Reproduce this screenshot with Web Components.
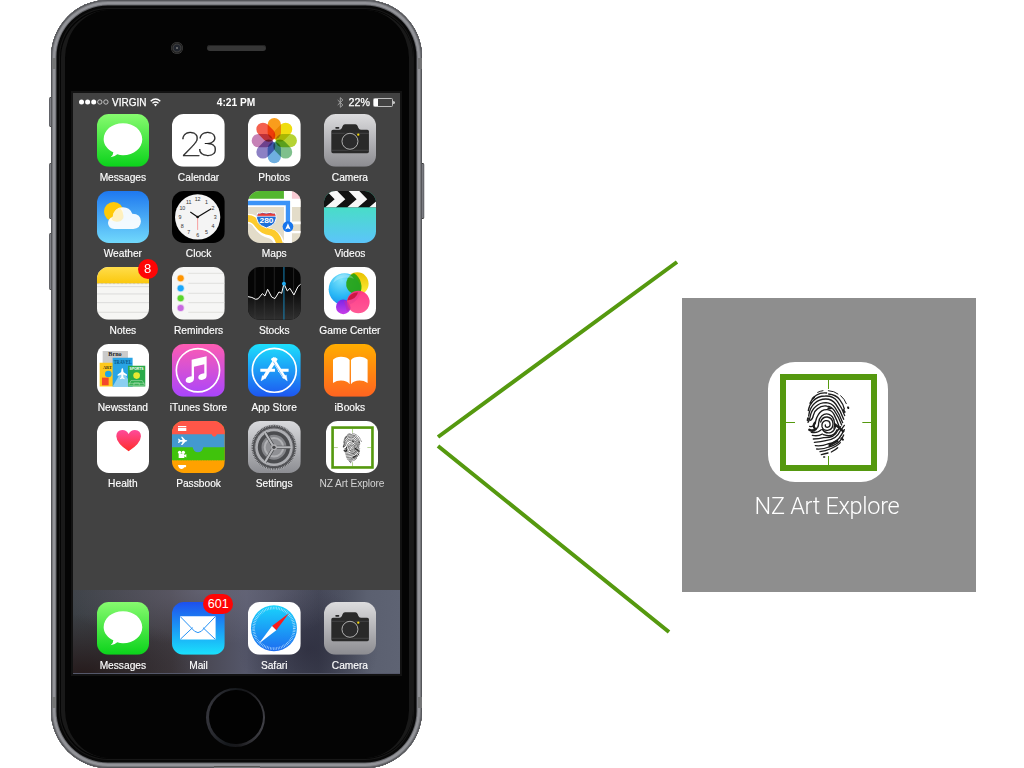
<!DOCTYPE html>
<html lang="en">
<head>
<meta charset="utf-8">
<title>NZ Art Explore</title>
<style>
html,body{margin:0;width:1024px;height:768px;overflow:hidden;background:#fff;font-family:"Liberation Sans",Arial,sans-serif}
</style>
</head>
<body>
<home-showcase></home-showcase>
<script>
const range = n => Array.from({length:n},(_,i)=>i);
const grad = (id,a,b) => `<linearGradient id="${id}" x1="0" y1="0" x2="0" y2="1"><stop offset="0" stop-color="${a}"/><stop offset="1" stop-color="${b}"/></linearGradient>`;
const bg = (a,b) => `<defs>${grad('bg',a,b)}</defs><rect width="158" height="158" fill="url(#bg)"/>`;
const petals = ['#f99d1c','#efdd10','#b5d334','#7fc08c','#6fafe0','#8c80c4','#c682b6','#f4604e'];

const nzMark = `
<rect width="360" height="360" fill="#fff"/>
<rect x="45" y="45" width="273" height="273" fill="none" stroke="#55990f" stroke-width="18"/>
<path d="M181.500 54v27M181.500 282v27M54 181.500h27M283 181.500h26" stroke="#55990f" stroke-width="3"/>
<g transform="translate(102 72)" fill="none" stroke="#1c1c1c" stroke-width="4" stroke-linecap="round" stroke-linejoin="round">
<path d="M47 19q8-4 16-5M79 14q18 1 29 10M116 29q12 10 17 24" stroke-width="3"/>
<path d="M24 52Q31 35 44 27q13-8 30-6M80 24q22 2 33 17 11 14 14 28"/>
<path d="M19 74q3-18 14-29 14-15 37-15 24-1 36 16 15 21 22 43"/>
<path d="M20 90q3-25 18-38 14-13 33-13 19 0 30 15 15 21 24 46"/>
<path d="M18 109q4-5 6-15 4-22 18-33 12-11 30-11 17 1 27 15 14 20 23 45"/>
<path d="M25 103q7-3 9-15 3-13 13-20 11-10 27-8 14 1 23 14 13 19 22 43"/>
<path d="M23 121q12 4 17-12 3-14 9-23 9-16 27-15 13 1 20 14 9 18 16 38"/>
<path d="M22 132q17 3 25-8 3-5 3-13 1-14 9-21 10-9 22-5 13 5 16 22 2 10-1 20"/>
<path d="M28 139q20 3 30-8M56 108q5-16 20-15 16 3 17 20 0 17-16 20-14 1-17-11-2-14 10-18 12-2 14 8 2 11-8 12-7 0-6-7"/>
<path d="M61 130q10 15 26 9 12-5 14-21M31 148q17 4 30-4M64 146q30 11 41-15"/>
<path d="M34 159q18 0 31-4 33 1 41-20l10-13"/>
<path d="M37 169q21-1 34-5 32-2 45-31l11-15"/>
<path d="M40 179q21 2 37-5 29-4 42-29l8-14"/>
<path d="M44 189q22 1 36-6 28-7 40-26l5-10"/>
<path d="M54 197q18-2 30-8 21-8 31-19M58 206q11-3 20-5M88 198q13-7 19-13M65 213h3"/>
<path d="M22 131q8 5 15 2M99 115l25 21M39 110q-9 11 2 20M83 178l23-13" stroke-width="7"/>
<path d="M138 64l1 2M128 78l-4-6M32 38l4-4M79 67h8M118 157l5 4M18 97l-1 6" stroke-width="6"/>
</g>`;

const camera = `${bg('#dcdcde','#8c8c91')}
<path d="M22 52q0-5 5-5h19q6 0 8-6l2-5q2-5 7-5h31q5 0 7 5l2 5q2 6 8 6h19q5 0 5 5v61q0 5-5 5H27q-5 0-5-5z" fill="#292929"/>
<rect x="34" y="39" width="12" height="5" rx="2" fill="#292929"/>
<path d="M22 58h113M22 109h113" stroke="#66666a" stroke-width="1.3"/>
<circle cx="78" cy="82" r="29" fill="#292929"/><circle cx="78" cy="82" r="24" fill="#2b2b2c" stroke="#c9c9c9" stroke-width="2.5"/>
<circle cx="103" cy="62" r="3.5" fill="#f5d90a"/>`;

const icons = {
messages: `${bg('#87fb6f','#0bd31b')}<path d="M78 28c33 0 58 21 58 48s-25 48-58 48q-9 0-17-3-9 8-20 9 8-6 8-15C32 107 20 93 20 76c0-27 25-48 58-48z" fill="#fff"/>`,
calendar: `<rect width="158" height="158" fill="#fff"/><text transform="translate(25 127) scale(1.16 1)" font-family="Roboto" font-weight="100" font-size="98" letter-spacing="-10" fill="#222" stroke="#222" stroke-width=".8">23</text>`,
photos: `<rect width="158" height="158" fill="#fff"/><g style="isolation:isolate">${petals.map((c,i)=>`<rect x="59" y="12" width="40" height="64" rx="20" fill="${c}" style="mix-blend-mode:multiply" transform="rotate(${i*45} 79 80)"/>`).join('')}</g><circle cx="79" cy="80" r="3" fill="#fff"/>`,
camera,
weather: `${bg('#1e78ef','#72dafc')}<circle cx="50" cy="62" r="29" fill="#ffc907"/><path d="M52 114q-18-1-19-18 1-14 14-18 4-29 31-29 20 0 28 19 26 1 26 23-1 22-23 23z" fill="#fff" opacity=".93"/><path d="M47 78q2-22 22-28 13 17 10 32-8 13-24 10-16-4-8-14z" fill="#ffeaa5" opacity=".65"/>`,
clock: `<rect width="158" height="158" fill="#000"/><circle cx="77" cy="78" r="68" fill="#f4f4f4"/>${range(12).map(i=>{const n=i+1,a=n*Math.PI/6;return `<text x="${77+53*Math.sin(a)}" y="${84-53*Math.cos(a)}" text-anchor="middle" font-size="16" fill="#333">${n}</text>`}).join('')}<path d="M77 78v39" stroke="#f68d8d" stroke-width="2.500"/><path d="M55 63l22 15 41-25" stroke="#111" stroke-width="3.500" fill="none"/><circle cx="77" cy="78" r="4" fill="#111"/>`,
maps: `<rect width="158" height="158" fill="#e3dcc9"/><path d="M0 0h108v24H0z" fill="#53b62f"/><path d="M130 0h28v26h-28z" fill="#f9cbd4"/><path d="M108 0h24v158h-24zM0 23h158v25H0zM132 92h26v8h-26zM132 120h26v7h-26z" fill="#fff"/><path d="M0 83q19 0 29 17 15 23 39 28 17 4 27 30" fill="none" stroke="#fff" stroke-width="30"/><path d="M-3 82q20 0 31 17 16 22 41 25 17 4 26 34" fill="none" stroke="#fdcb2e" stroke-width="20"/><path d="M0 36h120v70" fill="none" stroke="#3b93f7" stroke-width="13"/><circle cx="120" cy="107" r="16" fill="#1875ec"/><path d="M120 97l8 19-8-4-8 4z" fill="#fff"/><path d="M29 66q9 3 14-2 12 5 24 0 5 5 15 2 7 15-2 30-7 9-25 15-17-6-24-15-10-15-2-30z" fill="#1b70da" stroke="#fff" stroke-width="3"/><path d="M30 68q9 1 13-2 12 4 24 0 5 3 14 2l2 8H28z" fill="#e33c3a"/><path d="M27 76h57" stroke="#fff" stroke-width="2"/><text x="55.500" y="96" text-anchor="middle" font-size="23" font-weight="700" fill="#fff" textLength="42" lengthAdjust="spacingAndGlyphs">280</text>`,
videos: `${bg('#40e8b0','#5cc4fb')}<rect width="158" height="49" fill="#111"/>${[-46,20,86,152].map(x=>`<path d="M${x-12} 0h32l24 25-28 24h-32l28-24z" fill="#f7f7f7"/>`).join('')}`,
notes: `<rect width="158" height="158" fill="#f6f6f4"/><defs>${grad('nb','#ffdd4b','#fbc80d')}</defs><rect width="158" height="49" fill="url(#nb)"/><path d="M0 50h158" stroke="#a99e7d" stroke-width="2" stroke-dasharray="2 2"/><path d="M0 59h158M0 81h158M0 107h158M0 136h158" stroke="#cfcfcd" stroke-width="2"/>`,
reminders: `<rect width="158" height="158" fill="#f6f6f5"/><path d="M49 19h109M49 49h109M49 79h109M49 107h109M49 136h109" stroke="#d4d4d2" stroke-width="2"/>${['#ff9500','#1ba8fb','#5bd62c','#c869e0'].map((c,i)=>`<circle cx="26" cy="${[34,64,94,123][i]}" r="11.500" fill="${c}" opacity=".3"/><circle cx="26" cy="${[34,64,94,123][i]}" r="9" fill="${c}"/>`).join('')}`,
stocks: `<rect width="158" height="158" fill="#050505"/><defs>${grad('sg','#000','#303030')}</defs><path d="M0 89L23 97 43 80l8 7 8-20 12 23 10 5 12-20 8 4 7-29 10 22 8-8 12 20 12-25 8-7v106H0z" fill="url(#sg)"/><path d="M21 0v158M49 0v158M79 0v158M137 0v158" stroke="#3c3c3c" stroke-width="1.600"/><path d="M108 0v158" stroke="#1684b8" stroke-width="3"/><path d="M0 89q12 1 23 8 8 1 12-7l8-10 8 7 8-20 12 23 10 5 12-20 8 4 7-29 10 22 8-8 12 20 12-25 8-7" fill="none" stroke="#fff" stroke-width="3"/><circle cx="108" cy="50" r="6" fill="#1eaaf1"/>`,
game: `<defs><radialGradient id="b" cx=".4" cy=".2" r=".9"><stop offset="0" stop-color="#7be3fb"/><stop offset=".6" stop-color="#27b6f5"/><stop offset="1" stop-color="#1680e4"/></radialGradient>${grad('y','#e9c100','#fff03a')}${grad('p','#ff2f83','#ff4f8e')}${grad('v','#7b25e8','#c83ee8')}</defs><rect width="158" height="158" fill="#fff"/><circle cx="100" cy="50" r="34" fill="url(#y)"/><circle cx="62" cy="67" r="48" fill="url(#b)"/><path d="M67 57a34 34 0 0 1 23-38 48 48 0 0 1 17 63 34 34 0 0 1-40-25z" fill="#28a30b" opacity=".9"/><circle cx="58" cy="120" r="22" fill="url(#v)"/><circle cx="103" cy="105" r="34" fill="url(#p)" opacity=".94"/><path d="M70 101q5-23 32-25-4 21-32 25z" fill="#cc1744"/><path d="M60 102q13-3 20 22-5 7-11 9z" fill="#c22aad" opacity=".6"/><path d="M27 48q7-25 34-27 21 1 29 14Q56 24 27 48z" fill="#fff" opacity=".25"/>`,
news: `<rect width="158" height="158" fill="#fff"/><path d="M17 21h76v60H17z" fill="#cbcbcb"/><text x="54" y="35" font-family="Liberation Serif" font-weight="700" font-size="17" text-anchor="middle" textLength="40" lengthAdjust="spacingAndGlyphs" fill="#222">Brno</text><path d="M8 56h42v72H8z" fill="#ffc91d"/><text x="18" y="74" font-family="Liberation Serif" font-size="15" font-weight="700" textLength="27" lengthAdjust="spacingAndGlyphs" fill="#3a3218">ART</text><circle cx="34" cy="90" r="10" fill="#1ca6e9"/><rect x="15" y="101" width="20" height="23" fill="#f4482c"/><path d="M47 41h60v87H47z" fill="#29a4e5"/><text x="50" y="61" font-family="Liberation Serif" font-size="18" font-weight="700" textLength="54" lengthAdjust="spacingAndGlyphs" fill="#075786">TRAVEL</text><path d="M47 128l29-50 31 50z" fill="#8bcff1"/><path d="M76 72q3 1 3 9v3l11 8v4l-11-4v8l4 4v2l-7-2-7 2v-2l4-4v-8l-11 4v-4l11-8v-3q0-8 3-9z" fill="#fff"/><path d="M93 65h52v63H93z" fill="#2aab4a"/><text x="119" y="79" font-size="12" font-weight="700" textLength="42" text-anchor="middle" lengthAdjust="spacingAndGlyphs" fill="#fff">SPORTS</text><circle cx="119" cy="95" r="10" fill="#e8e931"/><path d="M95 124l7-14h34l7 14zM94 118h49M111 124v-7h16v7" stroke="#a8ddad" fill="none" stroke-width="2"/>`,
itunes: `${bg('#fd5cb2','#a945fd')}<circle cx="78" cy="79" r="65" fill="none" stroke="#fff" stroke-width="5"/><path d="M59 47l45-10v58q0 11-14 13-12 0-11-9 2-9 18-11V61L66 68v36q0 11-13 13-13 0-12-9 2-9 18-11z" fill="#fff"/>`,
appstore: `${bg('#1de0fc','#1d56f0')}<circle cx="79" cy="79" r="66" fill="none" stroke="#fff" stroke-width="5"/><path d="M37 79h44M90 79h32" stroke="#fff" stroke-width="9"/><path d="M73 42l37 60M85 42l-37 60" stroke="#fff" stroke-width="10.500"/><path d="M76 53l31 49" stroke="#2594f6" stroke-width="1.600"/><path d="M104 100l11-7 3 18zM43 95l10 7-14 9z" fill="#fff" stroke="#fff"/>`,
ibooks: `${bg('#ffad00','#ff6420')}<path d="M77 48q-8-10-26-10-15 0-24 9v70q11-7 24-7 18 0 26 11zM81 48q8-10 26-10 15 0 24 9v70q-11-7-24-7-18 0-26 11z" fill="#fff"/>`,
health: `<defs>${grad('h','#fe4a9b','#ff2d2a')}</defs><rect width="158" height="158" fill="#fff"/><path d="M95 91Q59 68 58 46q0-18 18-19 13 0 19 12 6-12 19-12 18 1 18 19-1 22-37 45z" fill="url(#h)"/>`,
passbook: `<rect width="158" height="158" fill="#ffa100"/><path d="M0 78h158v41H0z" fill="#40c30c"/><path d="M0 39h158v40H94q-3 15-16 15T62 79H0z" fill="#4399cf"/><path d="M0 0h158v40h-23q-2 7-8 7t-8-7H0z" fill="#ff5648"/><path d="M0 119h158" stroke="#ffa100" stroke-width="2" stroke-dasharray="3 2"/><g fill="#fff"><path d="M18 15h25v3H18zM18 20h25v10H18z"/><path d="M18 53h3l4 4h7l-5-10h4l9 10q6 1 6 2.500t-6 2.500l-9 10h-4l5-10h-7l-4 4h-3l2-6.500z"/><circle cx="23" cy="94" r="5"/><circle cx="34" cy="94" r="5"/><path d="M20 98h17v13H20zM37 103l6-4v11l-6-4z"/><path d="M18 132h22q5 1 1 7h-4q-3 5-8 5-9 0-11-12z"/></g>`,
settings: `${bg('#d9dadd','#8c8d92')}<circle cx="78" cy="79" r="63" fill="none" stroke="#4e4f52" stroke-width="9"/><circle cx="78" cy="79" r="66" fill="none" stroke="#b3b4b8" stroke-width="6" stroke-dasharray="2.600 2.600"/><circle cx="78" cy="79" r="58" fill="#adaeb2" stroke="#4a4b4e" stroke-width="2.500"/><circle cx="78" cy="79" r="43" fill="#86878b" stroke="#4b4c4f" stroke-width="11"/><circle cx="78" cy="79" r="28" fill="#8f9094" stroke="#b0b1b4" stroke-width="6"/><path d="M78 79h50M78 79L52 35M78 79L52 123" stroke="#4b4c4f" stroke-width="10"/><path d="M78 79h54M78 79L50 33M78 79L50 125" stroke="#b6b7ba" stroke-width="6"/><circle cx="78" cy="79" r="9" fill="#b0b0b3"/><circle cx="78" cy="79" r="5" fill="#46474a"/>`,
mail: `${bg('#1d50ee','#1ae1fc')}<rect x="24" y="43" width="107" height="70" rx="2" fill="#fff"/><path d="M25 44l43 44q10 8 20 0l42-44M25 112l37-35M130 112L93 77" fill="none" stroke="#2491f5" stroke-width="3"/>`,
safari: `<rect width="158" height="158" fill="#fff"/><defs>${grad('s','#19d4fc','#1d6cf0')}</defs><circle cx="78" cy="79" r="69" fill="url(#s)"/><circle cx="78" cy="79" r="61" fill="none" stroke="#c9ecff" stroke-width="8" stroke-dasharray="1.500 3.300"/><path d="M123 34L72 72l13 13z" fill="#fa1b1b"/><path d="M33 125l39-53 13 13z" fill="#fff"/>`
};

class AppIcon extends HTMLElement {
  connectedCallback(){
    const n=this.getAttribute('name'), nz=n==='nz', box=nz?360:158, badge=this.getAttribute('badge');
    this.attachShadow({mode:'open'}).innerHTML=`<style>
      :host{display:flex;flex-direction:column;align-items:center;width:75.7px;--s:52.6px}
      .tile{position:relative;width:var(--s);height:var(--s);flex:none}
      svg{display:block;width:100%;height:100%;border-radius:22.5%}
      .label{margin-top:5px;height:12px;line-height:12px;font-size:10.2px;white-space:nowrap;color:#fff;-webkit-text-stroke:.15px #fff}
      .badge{position:absolute;top:-8px;right:-8.500px;box-sizing:border-box;min-width:20px;height:20px;border-radius:10px;padding:0 4.500px;text-align:center;background:#fe0505;color:#fff;font-size:13px;line-height:20px}
      .badge.n601{font-size:12.600px}
      :host([name=nz]) .label{color:#d4d4d4;letter-spacing:-.1px;-webkit-text-stroke:0}
      :host([large]){--s:120px;width:auto}
      :host([large]) .label{font:300 23.500px/28px Roboto,sans-serif;letter-spacing:-.3px;height:28px;margin:10px 2px 0 0;color:#fff}
    </style><div class="tile"><svg viewBox="0 0 ${box} ${box}" font-family="Liberation Sans">${nz?nzMark:icons[n]}</svg>${badge?`<div class="badge n${badge}">${badge}</div>`:''}</div><div class="label"><slot></slot></div>`;
  }
}
class StatusBar extends HTMLElement {
  connectedCallback(){
    this.attachShadow({mode:'open'}).innerHTML=`<style>
      :host{display:grid;grid-template-columns:1fr auto 1fr;align-items:center;height:18px;padding:0 5px 0 6px;box-sizing:border-box;color:#fff;font-size:10px;line-height:18px}
      div{display:flex;align-items:center}.r{justify-content:flex-end}b{font-size:10.200px;margin-right:2px}
      span{-webkit-text-stroke:.25px #fff;padding-top:1px;line-height:17px}b{padding-top:1px;line-height:17px}
      svg{display:block;flex:none}
    </style>
    <div><svg width="30" height="8" viewBox="0 0 30 8"><g fill="#fff"><circle cx="2.500" cy="4" r="2.500"/><circle cx="8.600" cy="4" r="2.500"/><circle cx="14.700" cy="4" r="2.500"/></g><g fill="none" stroke="#ddd" stroke-width=".8"><circle cx="20.800" cy="4" r="2.200"/><circle cx="26.900" cy="4" r="2.200"/></g></svg><span style="margin-left:3px">VIRGIN</span>
    <svg style="margin-left:4px" width="11" height="9" viewBox="0 0 11 9" fill="none" stroke="#fff" stroke-width="1.400"><path d="M.7 3.200q4.800-4.400 9.600 0M2.500 5.200q3-2.600 6 0"/><path d="M3.800 6.600q1.700-1.400 3.400 0L5.500 8.500z" fill="#fff" stroke="none"/></svg></div>
    <b>4:21 PM</b>
    <div class="r"><svg width="7" height="11" viewBox="0 0 7 11" fill="none" stroke="#aaa" stroke-width=".9"><path d="M.7 3l5.200 5L3.300 10.300V.7L5.900 3 .7 8"/></svg><span style="margin-left:5px;font-size:10.700px">22%</span>
    <svg style="margin-left:3px" width="22" height="9" viewBox="0 0 22 9"><rect x=".5" y=".5" width="19" height="8" rx="1" fill="none" stroke="#ccc" stroke-width=".9"/><path d="M1 1h4v7H1zM20.300 3q1.500 0 1.500 1.500T20.300 6z" fill="#fff"/></svg></div>`;
  }
}
class PhoneScreen extends HTMLElement {
  connectedCallback(){
    this.attachShadow({mode:'open'}).innerHTML=`<style>
      :host{display:flex;flex-direction:column;width:327px;height:581px;background:#424242;overflow:hidden}
      .apps{flex:1;display:grid;grid-template-columns:repeat(4,75.700px);grid-auto-rows:76.700px;padding:3px 0 0 12px}
      .dock{display:flex;height:84px;box-sizing:border-box;padding:12.400px 0 0 12px;background:radial-gradient(ellipse 150px 55px at 40% 0,#72728499,transparent),radial-gradient(ellipse 120px 60px at 3% 100%,#261b1c,transparent),radial-gradient(ellipse 70px 60px at 72% 70%,#29293aaa,transparent),linear-gradient(90deg,#3b4045,#403c42 30%,#55576a 53%,#3e4151 75%,#5b6070 90%,#5e6373);box-shadow:inset 0 -1px #55586a}
    </style><status-bar></status-bar><div class="apps"><slot></slot></div><div class="dock"><slot name="dock"></slot></div>`;
  }
}
class PhoneDevice extends HTMLElement {
  connectedCallback(){
    this.attachShadow({mode:'open'}).innerHTML=`<style>
      :host{display:block;position:relative;width:371px;height:768px}
      .shell{position:relative;box-sizing:border-box;width:371px;height:767.500px;border-radius:57px;background:#040404;padding:93px 0 0 22px;
       box-shadow:inset 0 0 0 1px #55565a,inset 0 0 0 2px #77787c,inset 0 0 0 4.500px #929398,inset 0 0 0 5.500px #636468,inset 0 0 0 8px #080808,inset 0 0 0 9px #171717,inset 0 0 0 10px #050505}
      .rim{position:absolute;inset:9.500px;border-radius:48px;border:solid #1c1c1c;border-width:0 4px;opacity:.9}
      .screen{position:relative;box-shadow:0 0 0 2px #121212;width:327px;height:581px}
      .btn{position:absolute;width:2.500px;background:linear-gradient(90deg,#55565b,#8c8d93);border-radius:2px 0 0 2px;border-top:1px solid #333;border-bottom:1px solid #333;box-sizing:border-box}
      .band{position:absolute;width:4px;height:11px;background:#747576}
      .lens{position:absolute;left:120px;top:41.500px;width:12px;height:12px;border-radius:50%;background:radial-gradient(circle at 50% 50%,#777 0 6%,#20242c 16% 35%,#3c3c3c 45%,#1c1c1c 60%,#4c4c4c 70%,#2c2c2c)}
      .speaker{position:absolute;left:156px;top:45px;width:59px;height:6px;border-radius:4px;background:#363636;box-shadow:inset 0 1px #222}
      .home{position:absolute;left:155px;top:687.500px;width:59px;height:59px;border-radius:50%;background:linear-gradient(100deg,#3b3b42,#15181c 45%,#18181b 60%,#4a4a51)}
      .home::after{content:"";position:absolute;inset:2.500px;border-radius:50%;background:#020202}
      .foot{position:absolute;left:163px;bottom:0;width:46px;height:2px;background:#77787b;border-top:1px solid #555;box-sizing:border-box}
    </style>
    <div class="btn" style="left:-2.500px;top:97px;height:30px"></div>
    <div class="btn" style="left:-2.500px;top:163px;height:56px"></div>
    <div class="btn" style="left:-2.500px;top:233px;height:57px"></div>
    <div class="btn" style="right:-2.500px;top:163px;height:56px;transform:scaleX(-1)"></div>
    <div class="shell"><div class="rim"></div>
    <div class="band" style="left:.5px;top:58px"></div><div class="band" style="right:.5px;top:58px"></div><div class="band" style="left:.5px;top:697px"></div><div class="band" style="right:.5px;top:697px"></div>
    <div class="lens"></div><div class="speaker"></div><div class="screen"><slot></slot></div><div class="home"></div><div class="foot"></div></div>`;
  }
}
class CalloutLines extends HTMLElement {
  connectedCallback(){
    this.attachShadow({mode:'open'}).innerHTML=`<style>:host{display:block}svg{display:block;overflow:visible}</style>
    <svg width="260" height="768" viewBox="422 0 260 768" stroke="#55990f" stroke-width="4"><path d="M438 437L677 262M438 446L669 632"/></svg>`;
  }
}
class DetailPanel extends HTMLElement {
  connectedCallback(){
    this.attachShadow({mode:'open'}).innerHTML=`<style>:host{display:flex;justify-content:center;box-sizing:border-box;width:294px;height:294px;padding:64px 2px 0 0;background:#8e8e8e}</style><slot></slot>`;
  }
}
class HomeShowcase extends HTMLElement {
  connectedCallback(){
    const app=(n,l,x='')=>`<app-icon name="${n}" ${x}>${l}</app-icon>`;
    this.attachShadow({mode:'open'}).innerHTML=`<style>
      :host{display:grid;grid-template-columns:371px 260px 294px;width:1024px;height:768px;box-sizing:border-box;padding-left:51px}
      detail-panel{margin-top:298px}
      app-icon[name=nz]:not([large]){margin-left:2px}
    </style>
    <phone-device><phone-screen>
    ${app('messages','Messages')}${app('calendar','Calendar')}${app('photos','Photos')}${app('camera','Camera')}
    ${app('weather','Weather')}${app('clock','Clock')}${app('maps','Maps')}${app('videos','Videos')}
    ${app('notes','Notes','badge="8"')}${app('reminders','Reminders')}${app('stocks','Stocks')}${app('game','Game Center')}
    ${app('news','Newsstand')}${app('itunes','iTunes Store')}${app('appstore','App Store')}${app('ibooks','iBooks')}
    ${app('health','Health')}${app('passbook','Passbook')}${app('settings','Settings')}${app('nz','NZ Art Explore')}
    ${app('messages','Messages','slot="dock"')}${app('mail','Mail','slot="dock" badge="601"')}${app('safari','Safari','slot="dock"')}${app('camera','Camera','slot="dock"')}
    </phone-screen></phone-device>
    <callout-lines></callout-lines>
    <detail-panel>${app('nz','NZ Art Explore','large')}</detail-panel>`;
  }
}
customElements.define('app-icon',AppIcon);
customElements.define('status-bar',StatusBar);
customElements.define('phone-screen',PhoneScreen);
customElements.define('phone-device',PhoneDevice);
customElements.define('callout-lines',CalloutLines);
customElements.define('detail-panel',DetailPanel);
customElements.define('home-showcase',HomeShowcase);
</script>
</body>
</html>
